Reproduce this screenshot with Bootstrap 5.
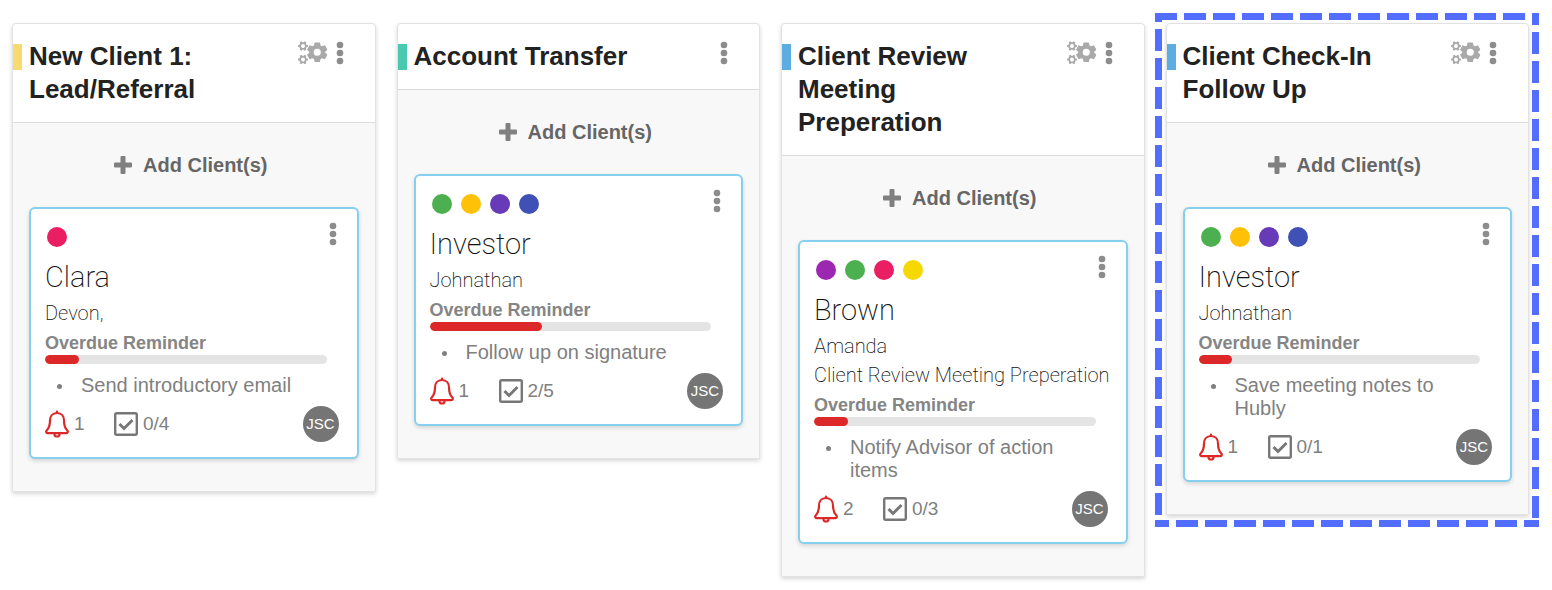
<!DOCTYPE html>
<html lang="en">
<head>
<meta charset="utf-8">
<meta name="viewport" content="width=device-width, initial-scale=1">
<title>Client workflows</title>
<link rel="stylesheet" href="https://cdn.jsdelivr.net/npm/bootstrap@5.3.0/dist/css/bootstrap.min.css">
<style>
  body { font-family: "Liberation Sans", Arial, sans-serif; background: #fff; color: #222; }
  .board { display: grid; grid-template-columns: repeat(4, minmax(0, 1fr)); gap: 21px; padding: 23px 23px 13px 12px; }
  .stage { position: relative; background: #f8f8f8; border: 1px solid #e2e2e2; border-radius: 4px 4px 1px 1px; box-shadow: 0 2px 4px rgba(0,0,0,.16); }
  .stage-head { background: #fff; padding: 16px 31px 16px 0; border-bottom: 1px solid #dcdcdc; border-radius: 4px 4px 0 0; }
  .swatch { width: 9px; height: 26px; margin: 4px 7px 0 0; }
  .swatch-yellow { background: #f8db70; }
  .swatch-teal { background: #48c9b0; }
  .swatch-blue { background: #5dade2; }
  .stage-title { font-size: 26px; line-height: 33px; font-weight: 700; color: #222; max-width: 240px; }
  .tool { border: 0; background: none; padding: 0; line-height: 0; }
  .stage-tools { gap: 8px; }
  .stage-tools .tool-menu { margin-top: 1px; }
  .stage-body { padding: 0 16px 32px; }
  .add-client { border: 0; background: none; color: #666; font-size: 20px; font-weight: 700; line-height: 24px; padding: 30px 6px 30px 0; gap: 11px; }
  .client { background: #fff; border: 2px solid #87cfef; border-radius: 6px; padding: 13px 13px 15px 14px; box-shadow: 0 2px 4px rgba(0,0,0,.14); }
  .client-top { padding: 0 7px 0 2px; }
  .dots { gap: 9px; padding-top: 5px; }
  .dot { width: 20px; height: 20px; border-radius: 50%; }
  .dot-pink { background: #e91e63; }
  .dot-green { background: #4caf50; }
  .dot-amber { background: #ffc107; }
  .dot-violet { background: #673ab7; }
  .dot-indigo { background: #3f51b5; }
  .dot-purple { background: #9c27b0; }
  .dot-yellow { background: #f4d800; }
  .client-name { font: 200 29px/40px Roboto, sans-serif; margin: 10px 0 2px; color: #111; }
  .client-line { font: 200 20px/29px Roboto, sans-serif; color: #111; white-space: nowrap; }
  .alert-label { font-size: 18px; line-height: 23px; font-weight: 700; color: #858585; margin-top: 4px; }
  .meter { height: 9px; border-radius: 5px; background: #e4e4e4; margin: 0 17px 0 0; }
  .meter .progress-bar { background: #dc2828; border-radius: 5px; }
  .steps { font-size: 20px; line-height: 23px; color: #808080; padding: 0 30px 0 36px; margin: 10px 0 9px; list-style: none; }
  .steps li { position: relative; }
  .steps li::before { content: ""; position: absolute; left: -24px; top: 10px; width: 5px; height: 5px; border-radius: 50%; background: #808080; }
  .client-foot { font-size: 19px; line-height: 36px; color: #808080; padding-right: 5px; }
  .count { gap: 5px; }
  .count-alerts { min-width: 69px; }
  .owner { width: 36px; height: 36px; border-radius: 50%; background: #757575; color: #fff; font-size: 15px; line-height: 36px; }
  .picked::after { content: ""; position: absolute; inset: -11px -11px -13px -12px; pointer-events: none; --c: #536dfe;
    background:
      repeating-linear-gradient(to right, var(--c) 0 22px, transparent 22px 29px) top / 100% 7px no-repeat,
      repeating-linear-gradient(to bottom, var(--c) 0 9px, transparent 9px 16px, var(--c) 16px 29px) left / 7px 100% no-repeat,
      repeating-linear-gradient(to bottom, var(--c) 0 12px, transparent 12px 19px, var(--c) 19px 29px) right / 7px 100% no-repeat,
      repeating-linear-gradient(to right, var(--c) 0 14px, transparent 14px 21px, var(--c) 21px 29px) bottom / 100% 7px no-repeat; }
  @media (max-width: 1200px) { .board { grid-template-columns: repeat(2, minmax(0, 1fr)); } }
  @media (max-width: 700px) { .board { grid-template-columns: minmax(0, 1fr); } .client-line { white-space: normal; } }
</style>
</head>
<body>
<svg class="d-none" aria-hidden="true">
  <symbol id="menu" viewBox="0 0 8 24"><g fill="#8c8c8c"><circle cx="4" cy="4" r="3.3"/><circle cx="4" cy="12" r="3.3"/><circle cx="4" cy="20" r="3.3"/></g></symbol>
  <symbol id="cog" viewBox="-10 -10 20 20"><path fill-rule="evenodd" d="M-2.6-9.6h5.2l.6 2.9 1.5.9 2.8-1 2.5 4.4-2.2 1.9v1l2.200 1.900-2.500 4.400-2.800-1-1.500.9-.6 2.900h-5.200l-.6-2.900-1.500-.9-2.800 1-2.500-4.400 2.200-1.900v-1l-2.200-1.900 2.500-4.400 2.800 1 1.500-.9zM0-3.500a3.500 3.500 0 1 0 0 7 3.500 3.500 0 1 0 0-7z"/></symbol>
  <symbol id="cog-small" viewBox="-10 -10 20 20"><circle r="5.700" fill="none" stroke="#a9a9a9" stroke-width="3.600"/><g stroke="#a9a9a9" stroke-width="4.400"><path id="spokes" d="M-9.800 0h3.800M6 0h3.800"/><use href="#spokes" transform="rotate(60)"/><use href="#spokes" transform="rotate(120)"/></g></symbol>
  <symbol id="gears" viewBox="0 0 30 24"><g fill="#a9a9a9"><use href="#cog" x="9" y="1" width="20.500" height="20.500"/><use href="#cog-small" x="0" y="0" width="10" height="10"/><use href="#cog-small" x="0" y="13.500" width="10" height="10"/></g></symbol>
  <symbol id="plus" viewBox="0 0 18 18"><path fill="#808080" d="M7.500 0h3q1 0 1 1v5.500H17q1 0 1 1v3q0 1-1 1h-5.500V17q0 1-1 1h-3q-1 0-1-1v-5.500H1q-1 0-1-1v-3q0-1 1-1h5.500V1q0-1 1-1z"/></symbol>
  <symbol id="bell" viewBox="0 0 24 28"><g fill="none" stroke="#dc2828" stroke-width="2.200" stroke-linejoin="round" stroke-linecap="round"><path d="M12 1.500V3M12 3C7.500 3 5 6.500 5 10.500c0 6-1.200 8-3.500 10.300-.8 1 .1 2.400 1.200 2.400h18.600c1.100 0 2-1.400 1.200-2.400-2.300-2.300-3.500-4.300-3.500-10.300C19 6.500 16.500 3 12 3z"/><path d="M9.500 24.200a2.500 2.300 0 0 0 5 0"/></g></symbol>
  <symbol id="task" viewBox="0 0 24 24"><rect x="1.200" y="1.200" width="21.600" height="21.600" rx="1.500" fill="none" stroke="#777" stroke-width="2.400"/><path d="M5.500 12l4.500 4.500L18.500 8" fill="none" stroke="#777" stroke-width="3"/></symbol>
</svg>

<main class="board align-items-start">
  <section class="stage">
    <header class="stage-head d-flex align-items-start">
      <span class="swatch swatch-yellow flex-shrink-0"></span>
      <h2 class="stage-title m-0 me-auto">New Client 1: Lead/Referral</h2>
      <div class="stage-tools d-flex">
        <button class="tool tool-gears" aria-label="Automations"><svg width="30" height="24"><use href="#gears"/></svg></button>
        <button class="tool tool-menu" aria-label="Stage menu"><svg width="8" height="24"><use href="#menu"/></svg></button>
      </div>
    </header>
    <div class="stage-body">
      <button class="add-client w-100 d-flex align-items-center justify-content-center"><svg width="18" height="18"><use href="#plus"/></svg>Add Client(s)</button>
      <article class="client">
        <div class="client-top d-flex justify-content-between align-items-start">
          <div class="dots d-flex"><span class="dot dot-pink"></span></div>
          <button class="tool" aria-label="Client menu"><svg width="8" height="24"><use href="#menu"/></svg></button>
        </div>
        <h3 class="client-name">Clara</h3>
        <div class="client-line">Devon,</div>
        <div class="alert-label">Overdue Reminder</div>
        <div class="progress meter" role="progressbar" aria-label="Progress" aria-valuenow="12" aria-valuemin="0" aria-valuemax="100"><div class="progress-bar" style="width:12%"></div></div>
        <ul class="steps"><li>Send introductory email</li></ul>
        <div class="client-foot d-flex align-items-center">
          <span class="count count-alerts d-flex align-items-center"><svg width="24" height="28"><use href="#bell"/></svg>1</span>
          <span class="count d-flex align-items-center"><svg width="24" height="24"><use href="#task"/></svg>0/4</span>
          <span class="owner ms-auto text-center">JSC</span>
        </div>
      </article>
    </div>
  </section>

  <section class="stage">
    <header class="stage-head d-flex align-items-start">
      <span class="swatch swatch-teal flex-shrink-0"></span>
      <h2 class="stage-title m-0 me-auto">Account Transfer</h2>
      <div class="stage-tools d-flex">
        <button class="tool tool-menu" aria-label="Stage menu"><svg width="8" height="24"><use href="#menu"/></svg></button>
      </div>
    </header>
    <div class="stage-body">
      <button class="add-client w-100 d-flex align-items-center justify-content-center"><svg width="18" height="18"><use href="#plus"/></svg>Add Client(s)</button>
      <article class="client">
        <div class="client-top d-flex justify-content-between align-items-start">
          <div class="dots d-flex"><span class="dot dot-green"></span><span class="dot dot-amber"></span><span class="dot dot-violet"></span><span class="dot dot-indigo"></span></div>
          <button class="tool" aria-label="Client menu"><svg width="8" height="24"><use href="#menu"/></svg></button>
        </div>
        <h3 class="client-name">Investor</h3>
        <div class="client-line">Johnathan</div>
        <div class="alert-label">Overdue Reminder</div>
        <div class="progress meter" role="progressbar" aria-label="Progress" aria-valuenow="40" aria-valuemin="0" aria-valuemax="100"><div class="progress-bar" style="width:40%"></div></div>
        <ul class="steps"><li>Follow up on signature</li></ul>
        <div class="client-foot d-flex align-items-center">
          <span class="count count-alerts d-flex align-items-center"><svg width="24" height="28"><use href="#bell"/></svg>1</span>
          <span class="count d-flex align-items-center"><svg width="24" height="24"><use href="#task"/></svg>2/5</span>
          <span class="owner ms-auto text-center">JSC</span>
        </div>
      </article>
    </div>
  </section>

  <section class="stage">
    <header class="stage-head d-flex align-items-start">
      <span class="swatch swatch-blue flex-shrink-0"></span>
      <h2 class="stage-title m-0 me-auto">Client Review Meeting Preperation</h2>
      <div class="stage-tools d-flex">
        <button class="tool tool-gears" aria-label="Automations"><svg width="30" height="24"><use href="#gears"/></svg></button>
        <button class="tool tool-menu" aria-label="Stage menu"><svg width="8" height="24"><use href="#menu"/></svg></button>
      </div>
    </header>
    <div class="stage-body">
      <button class="add-client w-100 d-flex align-items-center justify-content-center"><svg width="18" height="18"><use href="#plus"/></svg>Add Client(s)</button>
      <article class="client">
        <div class="client-top d-flex justify-content-between align-items-start">
          <div class="dots d-flex"><span class="dot dot-purple"></span><span class="dot dot-green"></span><span class="dot dot-pink"></span><span class="dot dot-yellow"></span></div>
          <button class="tool" aria-label="Client menu"><svg width="8" height="24"><use href="#menu"/></svg></button>
        </div>
        <h3 class="client-name">Brown</h3>
        <div class="client-line">Amanda</div>
        <div class="client-line">Client Review Meeting Preperation</div>
        <div class="alert-label">Overdue Reminder</div>
        <div class="progress meter" role="progressbar" aria-label="Progress" aria-valuenow="12" aria-valuemin="0" aria-valuemax="100"><div class="progress-bar" style="width:12%"></div></div>
        <ul class="steps"><li>Notify Advisor of action items</li></ul>
        <div class="client-foot d-flex align-items-center">
          <span class="count count-alerts d-flex align-items-center"><svg width="24" height="28"><use href="#bell"/></svg>2</span>
          <span class="count d-flex align-items-center"><svg width="24" height="24"><use href="#task"/></svg>0/3</span>
          <span class="owner ms-auto text-center">JSC</span>
        </div>
      </article>
    </div>
  </section>

  <section class="stage picked">
    <header class="stage-head d-flex align-items-start">
      <span class="swatch swatch-blue flex-shrink-0"></span>
      <h2 class="stage-title m-0 me-auto">Client Check-In Follow Up</h2>
      <div class="stage-tools d-flex">
        <button class="tool tool-gears" aria-label="Automations"><svg width="30" height="24"><use href="#gears"/></svg></button>
        <button class="tool tool-menu" aria-label="Stage menu"><svg width="8" height="24"><use href="#menu"/></svg></button>
      </div>
    </header>
    <div class="stage-body">
      <button class="add-client w-100 d-flex align-items-center justify-content-center"><svg width="18" height="18"><use href="#plus"/></svg>Add Client(s)</button>
      <article class="client">
        <div class="client-top d-flex justify-content-between align-items-start">
          <div class="dots d-flex"><span class="dot dot-green"></span><span class="dot dot-amber"></span><span class="dot dot-violet"></span><span class="dot dot-indigo"></span></div>
          <button class="tool" aria-label="Client menu"><svg width="8" height="24"><use href="#menu"/></svg></button>
        </div>
        <h3 class="client-name">Investor</h3>
        <div class="client-line">Johnathan</div>
        <div class="alert-label">Overdue Reminder</div>
        <div class="progress meter" role="progressbar" aria-label="Progress" aria-valuenow="12" aria-valuemin="0" aria-valuemax="100"><div class="progress-bar" style="width:12%"></div></div>
        <ul class="steps"><li>Save meeting notes to Hubly</li></ul>
        <div class="client-foot d-flex align-items-center">
          <span class="count count-alerts d-flex align-items-center"><svg width="24" height="28"><use href="#bell"/></svg>1</span>
          <span class="count d-flex align-items-center"><svg width="24" height="24"><use href="#task"/></svg>0/1</span>
          <span class="owner ms-auto text-center">JSC</span>
        </div>
      </article>
    </div>
  </section>
</main>
<script src="https://cdn.jsdelivr.net/npm/bootstrap@5.3.0/dist/js/bootstrap.bundle.min.js"></script>
</body>
</html>
